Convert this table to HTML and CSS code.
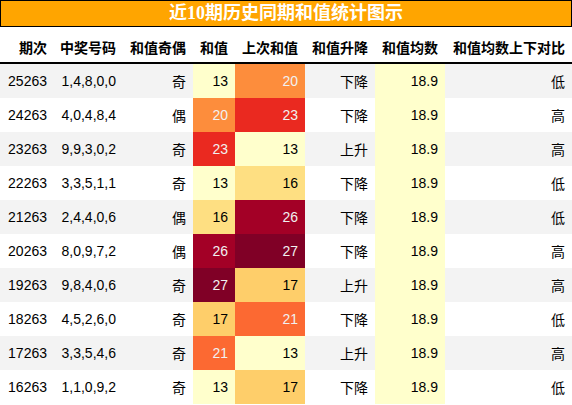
FILE: index.html
```html
<!DOCTYPE html>
<html lang="zh">
<head>
  <meta charset="UTF-8">
  <title>近10期历史同期和值统计图示</title>
  <link rel="stylesheet" href="styles.css">
</head>
<body>
  <div class="title">近10期历史同期和值统计图示</div>
  <table class="stats">
    <colgroup>
      <col class="c1"><col class="c2"><col class="c3"><col class="c4">
      <col class="c5"><col class="c6"><col class="c7"><col class="c8">
    </colgroup>
    <thead>
      <tr>
        <th>期次</th><th>中奖号码</th><th>和值奇偶</th><th>和值</th>
        <th>上次和值</th><th>和值升降</th><th>和值均数</th><th>和值均数上下对比</th>
      </tr>
    </thead>
    <tbody>
      <tr><td>25263</td><td>1,4,8,0,0</td><td>奇</td><td class="h13">13</td><td class="h20">20</td><td>下降</td><td class="avg">18.9</td><td>低</td></tr>
      <tr><td>24263</td><td>4,0,4,8,4</td><td>偶</td><td class="h20">20</td><td class="h23">23</td><td>下降</td><td class="avg">18.9</td><td>高</td></tr>
      <tr><td>23263</td><td>9,9,3,0,2</td><td>奇</td><td class="h23">23</td><td class="h13">13</td><td>上升</td><td class="avg">18.9</td><td>高</td></tr>
      <tr><td>22263</td><td>3,3,5,1,1</td><td>奇</td><td class="h13">13</td><td class="h16">16</td><td>下降</td><td class="avg">18.9</td><td>低</td></tr>
      <tr><td>21263</td><td>2,4,4,0,6</td><td>偶</td><td class="h16">16</td><td class="h26">26</td><td>下降</td><td class="avg">18.9</td><td>低</td></tr>
      <tr><td>20263</td><td>8,0,9,7,2</td><td>偶</td><td class="h26">26</td><td class="h27">27</td><td>下降</td><td class="avg">18.9</td><td>高</td></tr>
      <tr><td>19263</td><td>9,8,4,0,6</td><td>奇</td><td class="h27">27</td><td class="h17">17</td><td>上升</td><td class="avg">18.9</td><td>高</td></tr>
      <tr><td>18263</td><td>4,5,2,6,0</td><td>奇</td><td class="h17">17</td><td class="h21">21</td><td>下降</td><td class="avg">18.9</td><td>低</td></tr>
      <tr><td>17263</td><td>3,3,5,4,6</td><td>奇</td><td class="h21">21</td><td class="h13">13</td><td>上升</td><td class="avg">18.9</td><td>高</td></tr>
      <tr><td>16263</td><td>1,1,0,9,2</td><td>奇</td><td class="h13">13</td><td class="h17">17</td><td>下降</td><td class="avg">18.9</td><td>低</td></tr>
    </tbody>
  </table>
</body>
</html>
```

FILE: styles.css
```css
body {
  margin: 0;
  padding: 0;
  background: #fff;
  font-family: "Liberation Sans", "Noto Sans CJK SC", sans-serif;
  color: #000;
}
.title {
  width: 570px;
  height: 25px;
  line-height: 25px;
  background: #ffa500;
  border: 1px solid #000;
  color: #fff;
  font-family: "Liberation Serif", "Noto Sans CJK SC", serif;
  font-size: 18px;
  font-weight: bold;
  text-align: center;
}
.stats {
  width: 572px;
  table-layout: fixed;
  border-collapse: separate;
  border-spacing: 0;
  font-size: 14px;
}
.c1 { width: 54px; }
.c2 { width: 69px; }
.c3 { width: 70px; }
.c4 { width: 42px; }
.c5 { width: 70px; }
.c6 { width: 70px; }
.c7 { width: 70px; }
.c8 { width: 127px; }
th {
  height: 37px;
  padding: 4px 7px 0 0;
  box-sizing: border-box;
  text-align: right;
  font-weight: bold;
  white-space: nowrap;
  border-bottom: 2px solid #000;
}
td {
  height: 34px;
  padding: 0 7px 0 0;
  box-sizing: border-box;
  text-align: right;
  white-space: nowrap;
}
tbody tr:nth-child(odd) { background: #f3f3f3; }

.avg { background: #ffffcc; }
.h13 { background: #ffffcc; }
.h16 { background: #fedf82; }
.h17 { background: #fece6a; }
.h20 { background: #fd8d3c; color: #f1f1f1; }
.h21 { background: #fc6932; color: #f1f1f1; }
.h23 { background: #ea2920; color: #f1f1f1; }
.h26 { background: #a30026; color: #f1f1f1; }
.h27 { background: #800026; color: #f1f1f1; }
```
